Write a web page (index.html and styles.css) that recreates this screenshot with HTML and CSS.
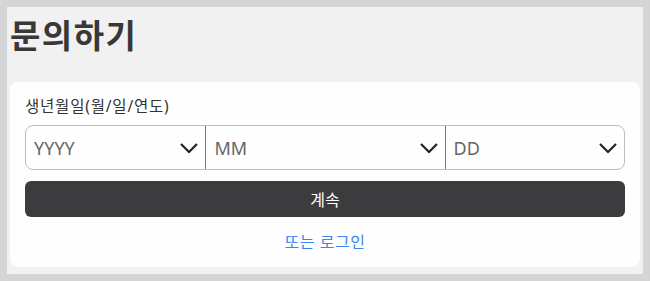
FILE: index.html
```html
<!DOCTYPE html>
<html lang="ko">
<head>
    <meta charset="UTF-8">
    <meta name="viewport" content="width=device-width, initial-scale=1.0">
    <title>문의하기</title>
    <link rel="stylesheet" href="styles.css">
</head>
<body>
    <div class="page">
        <h1>문의하기</h1>

        <div class="card">
            <label class="field-label">생년월일(월/일/연도)</label>
            <div class="date-group">
                <div class="date-part year">
                    <span>YYYY</span>
                    <svg class="chev" viewBox="0 0 20 12"><path d="M2 2 L10 10 L18 2" /></svg>
                </div>
                <div class="date-part month">
                    <span>MM</span>
                    <svg class="chev" viewBox="0 0 20 12"><path d="M2 2 L10 10 L18 2" /></svg>
                </div>
                <div class="date-part day">
                    <span>DD</span>
                    <svg class="chev" viewBox="0 0 20 12"><path d="M2 2 L10 10 L18 2" /></svg>
                </div>
            </div>

            <button class="continue">계속</button>

            <a class="login-link" href="#">또는 로그인</a>
        </div>
    </div>
</body>
</html>
```

FILE: styles.css
```css
html, body {
    height: 100%;
}
body {
    margin: 0;
    font-family: "Noto Sans", "Noto Sans CJK KR", sans-serif;
    background: #d4d5d7;
    padding: 7px;
    box-sizing: border-box;
}
.page {
    background: #f1f1f1;
    height: 100%;
    padding: 3px 3px 7px 3px;
    box-sizing: border-box;
    display: flex;
    flex-direction: column;
}
h1 {
    margin: 0;
    height: 72px;
    font-size: 33px;
    font-weight: 600;
    color: #383838;
    line-height: 52px;
    letter-spacing: 1.5px;
}
.card {
    background: #fefefe;
    border-radius: 8px;
    padding: 14px 15px 0 15px;
    flex: 1;
    display: flex;
    flex-direction: column;
}
.field-label {
    font-size: 15.5px;
    color: #333;
    line-height: 20px;
    margin-bottom: 9px;
    letter-spacing: 0.8px;
}
.date-group {
    display: flex;
    height: 45px;
    border: 1px solid #bdbdbd;
    border-radius: 8px;
    box-sizing: border-box;
}
.date-part {
    display: flex;
    align-items: center;
    justify-content: space-between;
    padding: 0 6px 0 8px;
    font-size: 18px;
    color: #666;
    box-sizing: border-box;
}
.year {
    width: 30%;
}
.month {
    width: 40%;
    border-left: 1px solid #777;
}
.day {
    width: 30%;
    border-left: 1px solid #777;
}
.chev {
    width: 20px;
    height: 12px;
    fill: none;
    stroke: #222;
    stroke-width: 2.2;
}
.continue {
    margin-top: 11px;
    height: 36px;
    width: 100%;
    border: none;
    border-radius: 6px;
    background: #3c3c3e;
    color: #fff;
    font-family: inherit;
    font-size: 16px;
    cursor: pointer;
}
.login-link {
    margin-top: 12px;
    text-align: center;
    color: #3d83f4;
    text-decoration: none;
    font-size: 16px;
    letter-spacing: 0.5px;
}
```
